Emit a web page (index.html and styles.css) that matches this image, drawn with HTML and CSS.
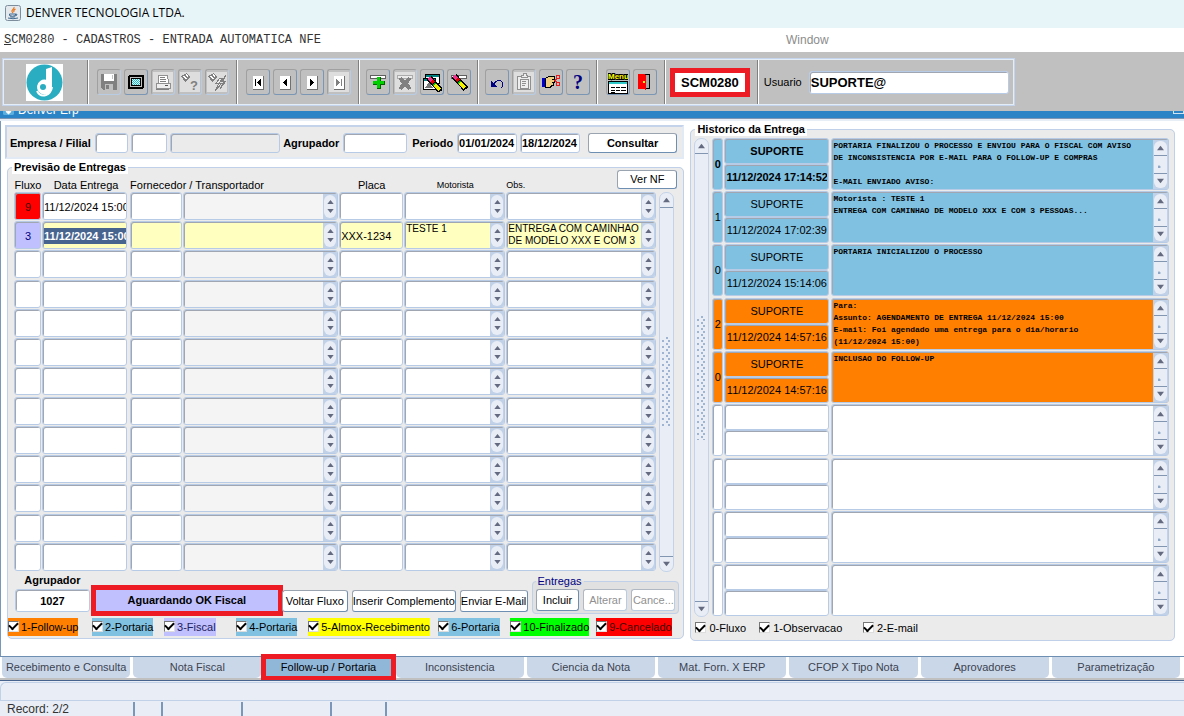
FILE: index.html
```html
<!DOCTYPE html>
<html lang="pt-BR">

<head>
    <meta charset="UTF-8">
    <meta name="viewport" content="width=device-width, initial-scale=1.0">
    <title>DENVER TECNOLOGIA LTDA.</title>
    <link rel="stylesheet" href="styles.css">
    <script src="script.js" defer></script>
</head>

<body>
    <header class="titlebar">
        <svg class="java" viewBox="0 0 16 16">
            <rect x=".5" y=".5" width="15" height="15" rx="2" fill="#e4e9ee" stroke="#7e8d9c" />
            <path d="M9 2c1 2-3 3-2 4.500q.5 1 1 1.500M10.500 4c-2 1-2 2-1.500 3" fill="none" stroke="#e8791e" stroke-width="1.200" />
            <path d="M4.500 9h6v1.500q-3 1.500-6 0zM10.500 9q2.500 0 1 1.500l-1 .5M3 13q5 1.500 10 0M5 11.800q3 .8 5 0" fill="none" stroke="#41698f" />
        </svg>
        <span>DENVER TECNOLOGIA LTDA.</span>
    </header>

    <nav class="menubar">
        <a href="#" class="menu-form"><u>S</u>CM0280 - CADASTROS - ENTRADA AUTOMATICA NFE</a>
        <a href="#" class="menu-window">Window</a>
    </nav>

    <div class="toolbar-area">
        <div class="toolbar">
            <div class="group logo-group">
                <svg class="logo" viewBox="0 0 37 37">
                    <rect width="37" height="37" fill="#fff" />
                    <circle cx="18.500" cy="18.500" r="18" fill="#2badc1" />
                    <path d="M20 5l6-2v20a7.500 7.500 0 1 1-6-7.300z" fill="#fff" />
                    <path d="M20 23a3 3 0 1 0-3 3q3 0 3-3z" fill="#2badc1" />
                    <path d="M11 27q3 6 9 4 5-2 6-8" fill="none" stroke="#fff" stroke-width="2" />
                </svg>
            </div>
            <div class="group tools wide-group">
                <button class="tool" disabled aria-label="Salvar">
                    <svg viewBox="0 0 20 20"><path d="M2 2h16v16H4l-2-2z" fill="#808080" /><path d="M5 2h10v7H5z" fill="#fff" /><path d="M13 3h1v4h-1zM6 12h8v6H6z" fill="#c0c0c0" /><path d="M7 13h3v4H7z" fill="#808080" /></svg>
                </button>
                <button class="tool" aria-label="Tela">
                    <svg viewBox="0 0 20 20"><rect x="3" y="4" width="14" height="12" rx="1" fill="#c0c0c0" stroke="#000" stroke-width="2" /><rect x="5.500" y="6.500" width="9" height="7" fill="url(#dots)" stroke="#000" /></svg>
                </button>
                <button class="tool off" disabled aria-label="Imprimir">
                    <svg viewBox="0 0 20 20"><path d="M5 3h9l2 8H5z" fill="#fff" stroke="#909090" /><path d="M7 5h5M7 7h6M7 9h6M3 17h13l2-2" fill="none" stroke="#808080" /><path d="M3 11h14v5H3z" fill="#eee" stroke="#909090" /><path d="M12 13h3" stroke="#555" /></svg>
                </button>
                <button class="tool off" disabled aria-label="Consultar registro">
                    <svg viewBox="0 0 20 20"><path d="M1 4l6-3 3 4-5 5z" fill="#808080" /><path d="M3 4l4 3M6 2l2 3" stroke="#fff" /><text x="10" y="18" class="q-gray">?</text></svg>
                </button>
                <button class="tool off" disabled aria-label="Executar consulta">
                    <svg viewBox="0 0 20 20"><path d="M1 4l6-3 3 4-5 5z" fill="#808080" /><path d="M3 4l4 3M6 2l2 3" stroke="#fff" /><path d="M13 6l-4 5h3l-4 8 7-8h-3l4-5zM19 3l-4 6h2l-4 8 6-8h-3l3-6z" fill="#eee" stroke="#808080" /></svg>
                </button>
            </div>
            <div class="group tools wide-group">
                <button class="tool" aria-label="Primeiro"><svg viewBox="0 0 20 20"><use href="#page" /><path d="M7 7h1v7H7zM13 7v7l-4-3.500z" /></svg></button>
                <button class="tool" aria-label="Anterior"><svg viewBox="0 0 20 20"><use href="#page" /><path d="M12 7v7l-4-3.500z" /></svg></button>
                <button class="tool" aria-label="Proximo"><svg viewBox="0 0 20 20"><use href="#page" /><path d="M8 7v7l4-3.500z" /></svg></button>
                <button class="tool off" disabled aria-label="Ultimo"><svg viewBox="0 0 20 20"><use href="#page" /><path d="M7 7v7l4-3.500zM12 7h1v7h-1z" fill="#808080" /></svg></button>
            </div>
            <div class="group tools">
                <button class="tool" aria-label="Incluir registro">
                    <svg viewBox="0 0 20 20"><use href="#line" /><path d="M9 5h4v4h4v4h-4v4H9v-4H5V9h4z" fill="#006000" /><path d="M9 5h3v4h4v3h-4v4H9v-4H5V9h4z" fill="#00d000" /></svg>
                </button>
                <button class="tool off" disabled aria-label="Excluir registro">
                    <svg viewBox="0 0 20 20"><use href="#line" opacity=".4" /><path d="M5 6l10 11M15 6L5 17" stroke="#808080" stroke-width="4" /></svg>
                </button>
                <button class="tool" aria-label="Limpar bloco">
                    <svg viewBox="0 0 20 20"><path d="M3.500 2.500h14v9h-14z" fill="#fff" stroke="#000" /><path d="M4 4h13" stroke="#008080" stroke-width="2" /><path d="M1.500 6.500h12v11h-12z" fill="#fff" stroke="#000" /><path d="M2 8h11" stroke="#008080" stroke-width="2" /><path d="M3 16l4-6 4 6z" fill="#777" /><use href="#pen" x="2" y="2" /></svg>
                </button>
                <button class="tool" aria-label="Limpar registro">
                    <svg viewBox="0 0 20 20"><use href="#line" /><use href="#pen" /></svg>
                </button>
            </div>
            <div class="group tools">
                <button class="tool" aria-label="Desfazer"><svg viewBox="0 0 20 20"><path d="M7 12q3-5 7-3 4 3 0 7" fill="none" stroke="#000080" /><path d="M4 9v6h6z" fill="#000080" /></svg></button>
                <button class="tool off" disabled aria-label="Lista"><svg viewBox="0 0 20 20"><rect x="3.500" y="4.500" width="13" height="13" rx="1" fill="#eee" stroke="#909090" /><path d="M7 5V3h2V1h3v2h1v2zM6 7h8v9H6z" fill="#eee" stroke="#909090" /><path d="M8 9h4M8 11h4M8 13h3" stroke="#909090" /></svg></button>
                <button class="tool" aria-label="Recortar"><svg viewBox="0 0 20 20"><path d="M1 6h3v9H1z" fill="#0000d0" /><path d="M4.500 6.500l3-2h6v3h-3 3v3h-3 2v3h-2l-1 2h-5z" fill="#f0d080" stroke="#000" /><path d="M13 9l4-3M13 8l4 3" stroke="#e02020" /><circle cx="17" cy="5" r="2" fill="none" stroke="#e02020" /><circle cx="17" cy="12" r="2" fill="none" stroke="#e02020" /></svg></button>
                <button class="tool" aria-label="Ajuda"><svg viewBox="0 0 20 20"><text x="5" y="17" class="q-blue">?</text></svg></button>
            </div>
            <div class="group tools wide-group">
                <button class="tool" aria-label="Menu">
                    <svg class="wide" viewBox="0 0 20 24"><path d="M.5 11.500h19v12H.5z" fill="#fff" stroke="#000" /><path d="M1 13h18" stroke="#30c8c8" stroke-width="2" /><path d="M3 17h4M8 17h4M13 17h5M3 20h4M8 20h4M13 20h5M3 22h4" stroke="#000" /><text x="0" y="9" class="menu-word">Menu</text></svg>
                </button>
                <button class="tool" aria-label="Sair">
                    <svg viewBox="0 0 20 20"><path d="M8.500 2.500h6v14h-6z" fill="#a8a8a8" stroke="#000" /><path d="M3 2h7l1 2v14l-2-1H3z" fill="#f00" /><path d="M8 9h2v2H8z" fill="#ff0" /></svg>
                </button>
            </div>
            <div class="group code-group"><strong class="code">SCM0280</strong></div>
            <div class="group user-group">
                <label for="usuario">Usuario</label>
                <input type="text" id="usuario" value="SUPORTE@">
            </div>
        </div>
    </div>

    <!-- shared icon parts -->
    <svg class="defs" width="0" height="0">
        <defs>
            <pattern id="dots" width="2" height="2" patternUnits="userSpaceOnUse"><path d="M0 0h2v2H0z" fill="#fff" /><path d="M0 0h1v1H0zM1 1h1v1H1z" fill="#00c8d8" /></pattern>
            <g id="page"><path d="M5 4h10v13H5z" fill="#fff" /><path d="M5 17.500h10.500V4" fill="none" stroke="#707070" /></g>
            <g id="line"><path d="M2.500 3.500h15v3h-15z" fill="#fff" stroke="#606060" /></g>
            <g id="pen" fill="none"><path d="M5 4l12 13" stroke="#000" stroke-width="6" /><path d="M5 4l5 5" stroke="#f0308c" stroke-width="4" /><path d="M8 7l2 2" stroke="#e00000" stroke-width="4" /><path d="M10 10l1 1" stroke="#00c000" stroke-width="4" /><path d="M11 11l5 5" stroke="#f0f000" stroke-width="4" /></g>
            <symbol id="up" viewBox="0 0 8 5"><path d="M4 0L8 5H0z" /></symbol>
            <symbol id="down" viewBox="0 0 8 5"><path d="M4 5L8 0H0z" /></symbol>
        </defs>
    </svg>

    <div class="mdi-title">
        <svg viewBox="0 0 14 14"><rect width="14" height="14" rx="2" fill="#5bb0e0" /><path d="M4 9l3 3 3-3M7 5v6" fill="none" stroke="#fff" stroke-width="2" /></svg>
        <span>Denver Erp</span>
        <i></i>
    </div>

    <main class="content">
        <section class="left">
            <form class="filter">
                <b>Empresa / Filial</b>
                <input type="text" class="f-emp" aria-label="Empresa">
                <input type="text" class="f-fil" aria-label="Filial">
                <input type="text" class="f-nome" aria-label="Nome da filial" readonly>
                <label for="agr"><b>Agrupador</b></label>
                <input type="text" class="f-agr" id="agr">
                <label for="ini" class="periodo"><b>Periodo</b></label>
                <input type="text" class="f-data" id="ini" value="01/01/2024">
                <input type="text" class="f-data" aria-label="Periodo final" value="18/12/2024">
                <button type="button" class="btn consultar"><b>Consultar</b></button>
            </form>

            <fieldset class="panel previsao">
                <legend>Previsão de Entregas</legend>
                <button type="button" class="btn ver-nf">Ver NF</button>
                <div class="grid-wrap">
                    <table class="entregas">
                        <colgroup>
                            <col class="c-fluxo"><col class="c-data"><col class="c-cod"><col class="c-nome"><col class="c-placa"><col class="c-mot"><col class="c-obs">
                        </colgroup>
                        <thead>
                            <tr>
                                <th>Fluxo</th>
                                <th>Data Entrega</th>
                                <th colspan="2" class="esq">Fornecedor / Transportador</th>
                                <th>Placa</th>
                                <th class="small">Motorista</th>
                                <th class="small esq">Obs.</th>
                            </tr>
                        </thead>
                        <tbody id="entregas"></tbody>
                    </table>
                    <div class="scroll main-scroll"><svg><use href="#up" /></svg><i></i><svg><use href="#down" /></svg></div>
                </div>

                <div class="actions">
                    <div class="agrupador">
                        <label for="agrupador">Agrupador</label>
                        <input type="text" id="agrupador" value="1027">
                    </div>
                    <button type="button" class="status-btn">Aguardando OK Fiscal</button>
                    <button type="button" class="btn b-voltar">Voltar Fluxo</button>
                    <button type="button" class="btn b-inserir">Inserir Complemento</button>
                    <button type="button" class="btn b-enviar">Enviar E-Mail</button>
                    <fieldset class="grupo-entregas">
                        <legend>Entregas</legend>
                        <button type="button" class="btn">Incluir</button>
                        <button type="button" class="btn" disabled>Alterar</button>
                        <button type="button" class="btn" disabled>Cance...</button>
                    </fieldset>
                </div>

                <div class="fluxos">
                    <label class="laranja"><input type="checkbox" checked>1-Follow-up</label>
                    <label class="azul"><input type="checkbox" checked>2-Portaria</label>
                    <label class="lilas"><input type="checkbox" checked>3-Fiscal</label>
                    <label class="azul"><input type="checkbox" checked>4-Portaria</label>
                    <label class="amarelo"><input type="checkbox" checked>5-Almox-Recebimento</label>
                    <label class="azul"><input type="checkbox" checked>6-Portaria</label>
                    <label class="verde"><input type="checkbox" checked>10-Finalizado</label>
                    <label class="vermelho"><input type="checkbox" checked>9-Cancelado</label>
                </div>
            </fieldset>
        </section>

        <fieldset class="panel historico">
            <legend>Historico da Entrega</legend>
            <div class="hist-wrap">
                <div class="scroll hist-scroll"><svg><use href="#up" /></svg><i></i><svg><use href="#down" /></svg></div>
                <table class="hist">
                    <colgroup><col class="h-num"><col class="h-quem"><col class="h-texto"></colgroup>
                    <tbody id="historico"></tbody>
                </table>
            </div>
            <div class="tipos">
                <label><input type="checkbox" checked>0-Fluxo</label>
                <label><input type="checkbox" checked>1-Observacao</label>
                <label><input type="checkbox" checked>2-E-mail</label>
            </div>
        </fieldset>
    </main>

    <nav class="tabs">
        <a href="#">Recebimento e Consulta</a>
        <a href="#">Nota Fiscal</a>
        <a href="#" class="active">Follow-up / Portaria</a>
        <a href="#">Inconsistencia</a>
        <a href="#">Ciencia da Nota</a>
        <a href="#">Mat. Forn. X ERP</a>
        <a href="#">CFOP X Tipo Nota</a>
        <a href="#">Aprovadores</a>
        <a href="#">Parametrização</a>
    </nav>

    <footer class="status">
        <div class="message"></div>
        <div class="record">
            <span class="s-rec">Record: 2/2</span><span class="s-a"></span><span class="s-b"></span><span class="s-c"></span><span class="s-d"></span>
        </div>
    </footer>
</body>

</html>
```
FILE: styles.css
```css
* {
    box-sizing: border-box;
}

body {
    margin: 0;
    min-height: 100vh;
    display: flex;
    flex-direction: column;
    background: #fff;
    color: #000;
    font: 11px/13px "Liberation Sans", Arial, sans-serif;
}

input,
button,
textarea {
    font: inherit;
    color: inherit;
    margin: 0;
}

fieldset {
    margin: 0;
    padding: 0;
    min-width: 0;
}

a {
    color: inherit;
    text-decoration: none;
}

.defs {
    position: absolute;
}

/* title and menu */
.titlebar {
    height: 28px;
    display: flex;
    align-items: center;
    gap: 5px;
    padding: 0 5px 2px;
    background: #e8f5f8;
    font: 12px/16px "Open Sans", "Noto Sans", sans-serif;
}

.java {
    width: 16px;
    height: 16px;
}

.menubar {
    height: 24px;
    display: grid;
    grid-template-columns: 786fr 398fr;
    align-items: center;
}

.menu-form {
    padding-left: 4px;
    font-family: "Liberation Mono", "Courier New", monospace;
    font-size: 12px;
    color: #333;
}

.menu-window {
    font-size: 12px;
    color: #8c8c8c;
}

/* toolbar */
.toolbar-area {
    background: #c0c0c0;
    padding: 6px 0 5px 2px;
}

.toolbar {
    display: flex;
    width: max-content;
    height: 48px;
    border: 1px solid #c4d4ec;
    outline: 1px solid #e4ecf6;
    outline-offset: -2px;
}

.group {
    display: flex;
    align-items: center;
    padding: 0 7px 0 6px;
    border-right: 1px solid #fff;
    box-shadow: inset -1px 0 0 #808080;
}

.group:last-child {
    border: none;
    box-shadow: none;
}

.logo-group {
    padding: 0 25px 0 23px;
}

.logo {
    width: 37px;
    height: 37px;
}

.tools {
    gap: 3px;
}

.wide-group {
    padding: 0 8px;
}

.tool {
    width: 24px;
    height: 26px;
    padding: 1px;
    display: flex;
    align-items: center;
    justify-content: center;
    background: #c0c0c0;
    border: 1px solid #a0a0a0;
    border-right-color: #7a96b4;
    border-bottom-color: #7a96b4;
    border-radius: 3px;
}

.tool:disabled {
    border-right-color: #b8cce4;
    border-bottom-color: #b8cce4;
}

.tool svg {
    width: 20px;
    height: 20px;
    flex: none;
    shape-rendering: crispEdges;
}

.tool.off svg {
    background: #dedede;
}

.tool svg.wide {
    height: 24px;
}

.q-gray {
    font: bold 13px "Liberation Sans", sans-serif;
    fill: #808080;
}

.q-blue {
    font: bold 20px "Liberation Serif", serif;
    fill: #000080;
}

.menu-word {
    font: bold 8px "Liberation Sans", sans-serif;
    fill: #ff0;
    stroke: #000;
    stroke-width: 2px;
    paint-order: stroke;
}

.code-group {
    padding: 0 8px 0 4px;
}

.code {
    border: 5px solid #ed1c24;
    background: #fff;
    padding: 2px 6px;
    font-size: 13px;
    line-height: 15px;
}

.user-group {
    gap: 7px;
    padding: 0 5px;
}

.user-group input {
    width: 200px;
    height: 23px;
    font-size: 13px;
    font-weight: bold;
}

/* inner window title, cut by the toolbar */
.mdi-title {
    height: 10px;
    display: flex;
    align-items: flex-end;
    gap: 4px;
    padding-left: 3px;
    overflow: hidden;
    background: #2b84c6;
    border-bottom: 2px solid #e8eef6;
    box-shadow: inset 0 -1px 0 #7d96b4;
    color: #fff;
    font-size: 12px;
}

.mdi-title svg {
    width: 11px;
    height: 11px;
    margin-bottom: 4px;
}

.mdi-title span {
    line-height: 14px;
    margin-bottom: 2px;
}

.mdi-title i {
    width: 11px;
    height: 3px;
    margin: 0 0 5px auto;
    border: 1px solid #d0e4f4;
    border-top: none;
}

/* text boxes */
input[type=text],
.field {
    min-width: 0;
    padding: 0 1px;
    background: #fff;
    border: 1px solid #b8cbe6;
    border-radius: 3px;
    box-shadow: inset 1px 1px 0 #a0a7b2;
    outline: none;
}

input[readonly] {
    background: #ebebeb;
}

.btn {
    height: 22px;
    padding: 0;
    text-align: center;
    white-space: nowrap;
    background: #fff;
    border: 1px solid #9aa4b0;
    border-right-color: #6f8fb2;
    border-bottom-color: #6f8fb2;
    border-radius: 3px;
}

.btn:disabled {
    color: #909090;
    border-color: #b0b8c4 #b8cce4 #b8cce4 #b0b8c4;
}

input[type=checkbox] {
    appearance: none;
    flex: none;
    width: 11px;
    height: 11px;
    background: #fff;
    border: 1px solid #777;
    border-right-color: #ddd;
    border-bottom-color: #ddd;
    display: grid;
    place-items: center;
}

input[type=checkbox]:checked::before {
    content: "";
    width: 7px;
    height: 4px;
    border: solid #000;
    border-width: 0 0 2px 2px;
    transform: translateY(-1px) rotate(-45deg);
}

/* panels */
.content {
    display: grid;
    grid-template-columns: minmax(0, 680fr) minmax(0, 485fr);
    gap: 6px;
    padding: 4px 9px 15px 4px;
    border-left: 1px solid #7a96b8;
}

.left {
    min-width: 0;
}

.filter {
    display: flex;
    align-items: center;
    gap: 3px;
    height: 34px;
    margin-bottom: 2px;
    padding: 2px 5px 0 3px;
    white-space: nowrap;
    background: #ebebeb;
    border: 2px solid #c4d3e9;
    border-bottom-color: #e2eaf5;
    border-right-color: #e2eaf5;
}

.filter input {
    height: 20px;
    width: 0;
}

.filter label {
    margin-right: 1px;
}

.filter .f-emp {
    flex: 29;
    margin-left: 1px;
}

.filter .f-fil {
    flex: 32;
}

.filter .f-nome {
    flex: 107;
}

.filter .f-agr {
    flex: 60;
}

.filter .f-data {
    flex: 56;
    font-weight: bold;
}

.periodo {
    margin-left: 2px;
}

.consultar {
    flex: 88;
    height: 20px;
    margin-left: 5px;
}

.panel {
    position: relative;
    background: #ebebeb;
    border: 1px solid #bfd0e8;
    border-radius: 5px;
}

.panel > legend {
    margin-left: 4px;
    padding: 0 2px;
    background: #fff;
    font-weight: bold;
}

.previsao {
    margin-left: 2px;
    padding: 0 4px 0 0;
}

.ver-nf {
    position: absolute;
    top: -4px;
    right: 6px;
    width: 60px;
    height: 19px;
}

.grid-wrap {
    display: flex;
    gap: 3px;
    padding: 0 5px 0 6px;
}

/* deliveries grid */
table {
    border-collapse: collapse;
    table-layout: fixed;
    width: 100%;
}

td,
th {
    padding: 0;
}

th {
    height: 18px;
    font-weight: normal;
    white-space: nowrap;
    vertical-align: bottom;
}

th.esq {
    text-align: left;
}

th.small {
    font-size: 9px;
}

.c-fluxo {
    width: 28px;
}

.c-data {
    width: 88px;
}

.c-cod {
    width: 53px;
}

.c-nome {
    width: 156px;
}

.c-placa {
    width: 65px;
}

.c-mot {
    width: 102px;
}

.c-obs {
    width: 150px;
}

.entregas td {
    height: 29px;
    vertical-align: top;
    padding-right: 1px;
}

.entregas tr:nth-child(4n+3) td {
    height: 30px;
}

.entregas td:nth-child(2) {
    padding-right: 3px;
}

.entregas td:nth-child(7) {
    padding-right: 0;
}

.entregas .field {
    height: 28px;
    display: flex;
    align-items: center;
    padding: 1px 0 0 1px;
    overflow: hidden;
}

.field input[type=text],
.field textarea {
    flex: 1;
    width: 100%;
    min-width: 0;
    height: 16px;
    padding: 0;
    background: none;
    border: none;
    border-radius: 0;
    box-shadow: none;
    outline: none;
    resize: none;
    overflow: hidden;
}

.entregas .field textarea {
    height: 25px;
    font-size: 10px;
    line-height: 12px;
}

.field.centro input {
    text-align: center;
}

.nome .field {
    background: #f4f4f4;
}

.atual .field {
    background: #ffffc0;
}

.field.f9 {
    background: #f00;
    color: #400000;
}

.atual .field.f3 {
    background: #c0c0ff;
    color: #000080;
}

.field.selecionado input[type=text] {
    background: #47648f;
    color: #fff;
    font-weight: bold;
}

.spin {
    flex: none;
    align-self: stretch;
    width: 14px;
    display: flex;
    padding: 0 1px;
    background: #c0d1e8;
}

.spin span {
    flex: 1;
    display: flex;
    flex-direction: column;
    align-items: center;
    justify-content: center;
    gap: 5px;
    margin: 1px 0;
    background: #e9eef6;
    border-radius: 6px;
}

.spin svg {
    width: 7px;
    height: 4px;
    fill: #646a80;
}

/* scroll bars */
.scroll {
    flex: none;
    width: 15px;
    display: flex;
    flex-direction: column;
    align-items: center;
    background: #e9eef6;
    border: 1px solid #c4d3e9;
    border-radius: 7px;
}

.scroll svg {
    flex: none;
    width: 7px;
    height: 14px;
    fill: #646a80;
}

.scroll i {
    flex: 1;
    width: 100%;
    border: solid #8296b2;
    border-width: 1px 0;
    background: radial-gradient(circle at 1px 5px, #8fa8c8 1px, transparent 2px) center / 6px 6px no-repeat;
}

.main-scroll {
    margin-top: 18px;
}

.main-scroll i,
.hist-scroll i {
    display: grid;
    align-content: center;
    justify-content: center;
    background: none;
}

.main-scroll i::before,
.hist-scroll i::before {
    content: "";
    width: 10px;
    height: 90px;
    background: radial-gradient(circle at 1px 4px, #9fb4d0 1px, transparent 1px) 0 0 / 6px 6px, radial-gradient(circle at 1px 1px, #9fb4d0 1px, transparent 1px) 4px 0 / 6px 6px;
}

.hist-scroll i::before {
    height: 124px;
}

/* actions */
.actions {
    display: flex;
    align-items: flex-end;
    height: 44px;
    padding-left: 7px;
}

.agrupador {
    flex: 75;
    min-width: 0;
    text-align: center;
    font-weight: bold;
    margin-bottom: 4px;
}

.agrupador input {
    width: 100%;
    height: 23px;
    display: block;
    text-align: center;
}

.agrupador label {
    display: block;
    margin-bottom: 2px;
}

.status-btn {
    flex: 182;
    min-width: 0;
    height: 31px;
    margin-left: 1px;
    padding: 0;
    background: #c0c0ff;
    border: 5px solid #ed1c24;
    font-weight: bold;
}

.actions .btn {
    min-width: 0;
    margin-bottom: 4px;
}

.b-voltar {
    flex: 64;
    margin-left: -1px;
}

.b-inserir {
    flex: 102;
    margin-left: 4px;
}

.b-enviar {
    flex: 66;
    margin-left: 4px;
}

.grupo-entregas {
    flex: 140;
    height: 39px;
    margin: 0 0 2px 4px;
    padding: 1px 3px 0;
    display: flex;
    gap: 4px;
    background: #e1e1e1;
    border: 1px solid #c0d0e8;
    border-radius: 4px;
}

.grupo-entregas legend {
    padding: 0 2px;
    color: #000080;
}

.grupo-entregas .btn {
    flex: 1;
    margin: 0;
}

.fluxos {
    display: grid;
    grid-template-columns: 84fr 72fr 72fr 72fr 130fr 72fr 86fr 83fr;
    justify-items: start;
    margin: 2px 0;
}

.fluxos label {
    display: flex;
    align-items: center;
    gap: 2px;
    height: 18px;
    white-space: nowrap;
}

.fluxos label input {
    margin-bottom: 2px;
}

.laranja,
.k2 .field {
    background: #ff8000;
}

.azul,
.k1 .field {
    background: #80c0e0;
}

.lilas {
    background: #c0c0ff;
    color: #202060;
}

.amarelo {
    background: #ff0;
}

.verde {
    background: #0f0;
}

.vermelho {
    background: #f00;
    color: #400000;
}

/* history */
.historico {
    padding: 0 4px 0 3px;
    margin-top: -2px;
}

.historico > legend {
    margin-left: 1px;
}

.hist-wrap {
    display: flex;
    gap: 3px;
    margin-top: 2px;
}

.h-num {
    width: 12px;
}

.h-quem {
    width: 107px;
}

.hist td {
    height: 53px;
    vertical-align: top;
    padding-right: 1px;
}

.hist tr:nth-child(3n) td {
    height: 54px;
}

.hist tr:last-child td {
    height: 53px;
}

.hist .field {
    height: 52px;
    display: flex;
    align-items: center;
}

.hist .num .field {
    padding: 0;
}

.hist .quem .field {
    height: 26px;
    margin-right: 1px;
}

.hist .texto .field {
    padding: 1px 0 0 1px;
}

.hist .texto textarea {
    height: 50px;
    font: bold 8px/12px "Liberation Mono", "Courier New", monospace;
}

.hist .quem input,
.hist .num input {
    text-align: center;
}

.hist .primeira input {
    font-weight: bold;
}

.hist .barra {
    flex: none;
    align-self: stretch;
    width: 15px;
    padding: 1px;
    display: flex;
    background: #c0d1e8;
}

.hist .barra .scroll {
    width: 13px;
    border: none;
    border-radius: 6px;
}

.tipos {
    display: grid;
    grid-template-columns: 64fr 104fr 309fr;
    height: 23px;
    align-items: center;
    white-space: nowrap;
}

.tipos label {
    display: flex;
    align-items: center;
    gap: 3px;
    padding-left: 1px;
}

.tipos input {
    margin-bottom: 2px;
}

/* tabs */
.tabs {
    display: grid;
    grid-template-columns: repeat(9, 1fr);
    gap: 3px;
    padding: 0 4px 0 2px;
    border-top: 1px solid #6f8fb2;
    border-bottom: 2px solid #c0c0c0;
}

.tabs a {
    height: 21px;
    line-height: 20px;
    text-align: center;
    white-space: nowrap;
    color: #3c4450;
    background: #cad7e9;
    border-radius: 0 0 5px 5px;
}

.tabs .active {
    color: #000;
    background: #90b6d8;
    border-radius: 0;
    outline: 5px solid #ed1c24;
    outline-offset: -2px;
}

/* status */
.status {
    flex: 1;
    display: flex;
    flex-direction: column;
    background: #e9eef6;
    border-top: 1px solid #47648f;
    color: #333;
}

.message {
    height: 19px;
    margin-top: 1px;
    border-top: 1px solid #c0d1e8;
    border-left: 1px solid #c0d1e8;
    border-bottom: 1px solid #c0d1e8;
    border-radius: 6px 0 0 0;
}

.record {
    flex: 1;
    min-height: 15px;
    display: flex;
    padding: 1px 0 0 7px;
    font-size: 12px;
    line-height: 15px;
}

.record span {
    border-right: 2px solid #7a96b8;
}

.s-rec {
    width: 128px;
}

.s-a {
    width: 28px;
}

.s-b {
    width: 80px;
}

.s-c {
    width: 89px;
}

.s-d {
    width: 55px;
}
```
FILE: script.js
```js
const TOTAL_ENTREGAS = 13;
const TOTAL_HISTORICO = 9;

const entregas = [
    { fluxo: '9', data: '11/12/2024 15:00' },
    { fluxo: '3', data: '11/12/2024 15:00', placa: 'XXX-1234', motorista: 'TESTE 1', obs: 'ENTREGA COM CAMINHAO\nDE MODELO XXX E COM 3', atual: true }
];

const historico = [
    { num: '0', cor: 'k1', data: '11/12/2024 17:14:52', texto: 'PORTARIA FINALIZOU O PROCESSO E ENVIOU PARA O FISCAL COM AVISO\nDE INCONSISTENCIA POR E-MAIL PARA O FOLLOW-UP E COMPRAS\n\nE-MAIL ENVIADO AVISO:' },
    { num: '1', cor: 'k1', data: '11/12/2024 17:02:39', texto: 'Motorista : TESTE 1\nENTREGA COM CAMINHAO DE MODELO XXX E COM 3 PESSOAS...' },
    { num: '0', cor: 'k1', data: '11/12/2024 15:14:06', texto: 'PORTARIA INICIALIZOU O PROCESSO' },
    { num: '2', cor: 'k2', data: '11/12/2024 14:57:16', texto: 'Para:\nAssunto: AGENDAMENTO DE ENTREGA 11/12/2024 15:00\nE-mail: Foi agendado uma entrega para o dia/horario\n(11/12/2024 15:00)' },
    { num: '0', cor: 'k2', data: '11/12/2024 14:57:16', texto: 'INCLUSAO DO FOLLOW-UP' }
];

const spin = '<span class="spin"><span><svg><use href="#up"/></svg><svg><use href="#down"/></svg></span></span>';
const barra = '<span class="barra"><span class="scroll"><svg><use href="#up"/></svg><i></i><svg><use href="#down"/></svg></span></span>';

// Single line box
function campo(nome, valor, classe) {
    return `<div class="field ${classe || ''}"><input type="text" aria-label="${nome}" value="${valor || ''}"></div>`;
}

// Multi line box with its scroll control
function area(nome, valor, controle) {
    return `<div class="field"><textarea aria-label="${nome}">${valor || ''}</textarea>${controle}</div>`;
}

let linhas = '';
for (let i = 0; i < TOTAL_ENTREGAS; i++) {
    const e = entregas[i] || {};
    linhas += `<tr class="${e.atual ? 'atual' : ''}">
        <td>${campo('Fluxo', e.fluxo, 'centro f' + (e.fluxo || ''))}</td>
        <td>${campo('Data Entrega', e.data, e.atual ? 'selecionado' : '')}</td>
        <td>${campo('Fornecedor', '')}</td>
        <td class="nome">${area('Transportador', '', spin)}</td>
        <td>${campo('Placa', e.placa)}</td>
        <td>${area('Motorista', e.motorista, spin)}</td>
        <td>${area('Obs.', e.obs, spin)}</td>
    </tr>`;
}
document.getElementById('entregas').innerHTML = linhas;

linhas = '';
for (let i = 0; i < TOTAL_HISTORICO; i++) {
    const h = historico[i] || {};
    linhas += `<tr class="${h.cor || ''} ${i === 0 ? 'primeira' : ''}">
        <td class="num">${campo('Tipo', h.num)}</td>
        <td class="quem">${campo('Usuario', h.data ? 'SUPORTE' : '')}${campo('Data', h.data)}</td>
        <td class="texto">${area('Texto', h.texto, barra)}</td>
    </tr>`;
}
document.getElementById('historico').innerHTML = linhas;
```
